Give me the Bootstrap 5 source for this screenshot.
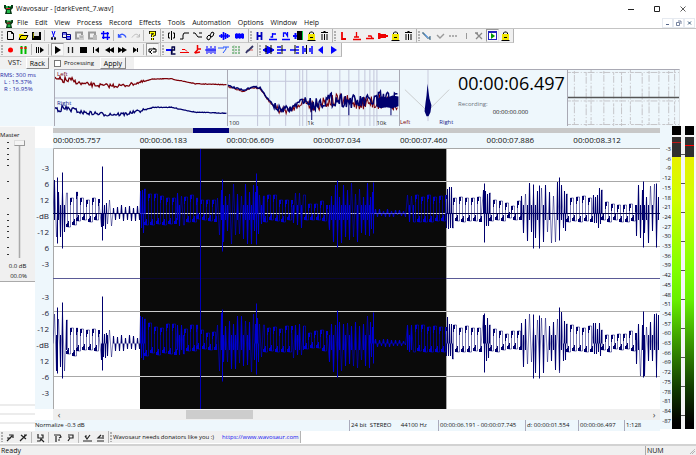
<!DOCTYPE html>
<html lang="en">
<head>
<meta charset="utf-8">
<meta name="viewport" content="width=device-width, initial-scale=1">
<title>Wavosaur</title>
<link href="https://cdn.jsdelivr.net/npm/bootstrap@5.3.0/dist/css/bootstrap.min.css" rel="stylesheet">
<style>
:root{--face:#f0f0f0;--panel:#eef7fc;--edge:#a9a9b4}
body{font-family:"Open Sans","Noto Sans",sans-serif;font-size:7px;line-height:10px;color:#111;background:#fff}
svg{display:block}
.app{min-height:100vh}
.titlebar{height:18px;padding:0 0 0 4px}
.titlebar .dino{width:9px;height:10px;margin-right:3px}
.caps button{border:0;background:none;width:26px;height:16px;padding:0}
.caps svg{width:8px;height:8px;margin:auto}
.menubar{height:11px;border-bottom:1px solid #c4c4c4;padding:0 1px 0 5px}
.menubar a{color:#111;text-decoration:none;line-height:10px}
.menus{gap:7px}
.menubar .dino{width:8px;height:9px;margin-right:4px}
.mdi button{border:1px solid #e6eaf0;background:#fff;width:11px;height:10px;padding:1px}
.mdi svg{width:7px;height:6px}
.toolrow{height:14px}
.toolset{background:var(--face);height:14px;border-right:1px solid #b4b4b4;border-bottom:1px solid #c8c8c8;padding-right:1px}
.grip{width:4px;height:10px;background:radial-gradient(circle at 2px 1px,#b0b0b0 1px,transparent 1px) 0 0/4px 3px}
.tool{width:13px;height:13px;padding:1px;border:0;background:none}
.tool.wide{width:15px;padding:1px 2px}
.tool svg{width:11px;height:11px}
.tool.on{background:#f8f8f8;border:1px solid #bbb;border-color:#999 #e4e4e4 #e4e4e4 #999;padding:0}
.rule{width:1px;height:11px;margin:0 2px 0 1px;background:#bcbcbc}
.vst{height:12px;width:134px;background:var(--face);padding-left:8px}
.push{font-size:7px;line-height:9px;height:12px;padding:0 3px;border:1px solid #fff;border-right-color:#888;border-bottom-color:#888;border-radius:0;background:var(--face)}
.vst input{width:7px;height:7px;margin:0 3px 0 0;-webkit-appearance:none;appearance:none;border:1px solid #777;background:#fff}
.vst input:checked{background:#446}
.vst label{font-size:6px;margin-left:5px}
.meters{height:57px}
.rms{width:54px;padding:3px 0 0;color:#2727a5;font-size:6px;line-height:7px;background:var(--panel)}
.scope{border:1px solid var(--edge);border-bottom:0;border-right:0;background:var(--panel);min-width:0}
.scope svg{width:100%;height:100%}
#scope{flex:172 1 0}
#spectrum{flex:170 1 0}
.clock{width:113px;background:var(--panel);border-top:1px solid var(--edge)}
.clock output{display:block;font-size:18px;line-height:26px;padding-left:4px;color:#000}
.tiny{font-size:6px;line-height:8px}
.side{width:35px}
.master{background:var(--face);height:156px;border-bottom:1px solid #aaa;border-top:1px solid #fafafa;font-size:6px;padding-top:3px}
.ticks{width:9px}
.fader{-webkit-appearance:none;appearance:none;writing-mode:vertical-lr;direction:rtl;width:12px;height:118px;margin:0;background:linear-gradient(#aaa,#aaa) center/1px 100% no-repeat,linear-gradient(#ddd,#ddd) center/3px 100% no-repeat}
.fader::-webkit-slider-thumb{-webkit-appearance:none;width:11px;height:6px;background:#f4f4f4;border:1px solid #999;border-top-color:#ddd;border-left-color:#ddd}
.slots div{height:9px;border-top:2px solid #ececec}
.center{min-width:0}
.overview{height:7px;padding:2px 0 0;margin-left:18px;background:var(--panel)}
.overview .track{height:5px;background:#c8c8c8}
.overview .pos{width:6%;margin-left:23%;height:5px;background:#00007a}
.timeline{height:15px;background:var(--panel);margin-left:18px;font-size:8px;line-height:13px}
.dbs{width:18px;background:var(--panel);font-size:8px;line-height:16px;color:#223;padding-right:4px;padding-top:3px}
.plot{min-height:261px;position:relative;min-width:0}
.plot svg{position:absolute;width:100%;height:100%}
.hbar{height:11px;margin-left:18px;background:#efefef}
.hbar button{border:0;background:none;width:12px;padding:0;line-height:9px;font-size:9px;color:#444}
.hbar .thumb{width:11%;margin-left:20%;height:9px;background:#cdcdcd}
.info{height:11px;background:var(--panel);font-size:6px;line-height:11px}
.cell{border-left:1px solid #aab;padding-left:1px;white-space:pre}
.cell.w1{width:89px}.cell.w2{width:87px}.cell.w3{width:53px}.cell.w4{width:46px}.cell.w5{width:36px}
.levels{width:36px;background:#f4f7f9;margin-bottom:2px}
.lnum{width:12px;font-size:6px;line-height:8px;color:#112;background:var(--panel);padding-top:19px;padding-right:1px;padding-bottom:4px}
.bar{width:9px;flex:none;border-top:9px solid #000;background:linear-gradient(#f4f4f4 0 2px,#303030 2px 22px,transparent 22px),linear-gradient(#e8f000 22px,#d0ff00 22%,#80ff00 46%,#68f000 56%,#3c9c00 70%,#123c00 86%,#000 98%);position:relative}
.bar i{position:absolute;left:0;right:0;top:7px;height:1px;background:#c01818}
.bar.r i{top:10px;background:#f00}
.notch{width:4px;background:repeating-linear-gradient(#f4f4f4 0 28px,#555 28px 29px)}
.donate{height:13px;font-size:6px;line-height:11px}
.donate a{color:#1414f0}
.donate .toolset{height:12px;border-bottom:0}
.statusbar{height:11px;background:var(--face);border-top:2px solid #d2d2d2;padding:0 1px;line-height:9px}
.num{width:50px;border-left:1px solid #aaa;padding-left:1px}
.resize{width:6px;height:6px}
</style>
<script src="https://cdn.jsdelivr.net/npm/bootstrap@5.3.0/dist/js/bootstrap.bundle.min.js"></script>
</head>
<body>
<svg width="0" height="0" class="position-absolute" aria-hidden="true">
  <symbol id="dino" viewBox="0 0 9 10"><path d="M0 1h2v1h5V1h2v3L7 6l1 4H1l1-4-2-2z" fill="#073b16"/><path d="M2 2h2v2H2zM5 2h2v1H5zM3 6h3v3H3z" fill="#21b84a"/><path d="M2 4h4v1H2z" fill="#d92a2a"/></symbol>
</svg>
<div class="app d-flex flex-column">
  <header>
    <div class="titlebar d-flex align-items-center">
      <svg class="dino"><use href="#dino"/></svg><span class="me-auto">Wavosaur - [darkEvent_7.wav]</span>
      <div class="caps d-flex">
        <button aria-label="Minimize"><svg viewBox="0 0 8 8"><path d="M1 4.500h6" stroke="#222"/></svg></button>
        <button aria-label="Maximize"><svg viewBox="0 0 8 8"><path d="M1.500 1.500h5v5h-5z" fill="none" stroke="#222"/></svg></button>
        <button aria-label="Close"><svg viewBox="0 0 8 8"><path d="M1.500 1.500l5 5m0-5l-5 5" stroke="#333" stroke-width=".8"/></svg></button>
      </div>
    </div>
    <nav class="menubar d-flex align-items-center">
      <svg class="dino"><use href="#dino"/></svg>
      <div class="menus d-flex me-auto"></div>
      <div class="mdi d-flex">
        <button aria-label="Minimize document"><svg viewBox="0 0 7 6"><path d="M2 4.500h3" stroke="#568"/></svg></button>
        <button aria-label="Restore document"><svg viewBox="0 0 7 6"><path d="M1.500 2.500h3v3h-3zM3 1h3v3" fill="none" stroke="#568" stroke-width=".8"/></svg></button>
        <button aria-label="Close document"><svg viewBox="0 0 7 6"><path d="M2 1.500l3 3m0-3l-3 3" stroke="#357"/></svg></button>
      </div>
    </nav>
    <div class="toolrow d-flex" id="tools1"></div>
    <div class="toolrow d-flex" id="tools2"></div>
    <div class="vst d-flex align-items-center">
      <span class="me-1">VST:</span><button class="push">Rack</button>
      <label class="d-flex align-items-center me-auto"><input type="checkbox">Processing</label>
      <button class="push me-2">Apply</button>
    </div>
  </header>

  <section class="meters d-flex pe-3">
    <div class="rms">RMS: 300 ms<div class="ps-1">L : 15.37%</div><div class="ps-1">R : 16.95%</div></div>
    <div class="scope" id="scope"></div>
    <div class="scope" id="spectrum"></div>
    <div class="scope" id="vector"></div>
    <div class="clock"><output>00:00:06.497</output><div class="tiny ps-1 pt-1 text-secondary">Recording:</div><div class="tiny text-center">00:00:00.000</div></div>
    <div class="scope border-end" id="sono"></div>
  </section>

  <main class="d-flex flex-grow-1">
    <aside class="side d-flex flex-column">
      <div class="master">
        <label for="vol" class="d-block">Master</label>
        <div class="d-flex"><svg class="ticks" viewBox="0 0 9 118" height="118"></svg><div class="ps-1"><input class="fader" id="vol" type="range" value="100"></div></div>
        <div class="text-center">0.0 dB</div><div class="text-end pe-2">00.0%</div>
      </div>
      <div class="slots mt-auto"><div></div><div></div><div></div></div>
    </aside>
    <div class="center flex-grow-1 d-flex flex-column">
      <div class="overview"><div class="track"><div class="pos"></div></div></div>
      <div class="timeline d-flex"></div>
      <div class="d-flex flex-grow-1">
        <div class="dbs d-flex flex-column"></div>
        <div class="plot flex-grow-1" id="plot"></div>
      </div>
      <div class="hbar d-flex align-items-center"><button aria-label="Scroll left">‹</button><div class="thumb"></div><button class="ms-auto" aria-label="Scroll right">›</button></div>
      <div class="info d-flex"><span class="flex-grow-1">Normalize -0.3 dB</span><span class="cell w1">24 bit  STEREO      44100 Hz</span><span class="cell w2">00:00:06.191 - 00:00:07.745</span><span class="cell w3">d: 00:00:01.554</span><span class="cell w4">00:00:06.497</span><span class="cell w5">1:128</span></div>
    </div>
    <aside class="levels d-flex">
      <div class="lnum d-flex flex-column justify-content-between text-end"></div>
      <div class="bar"><i></i></div><div class="notch"></div><div class="bar r"><i></i></div>
    </aside>
  </main>

  <footer>
    <div class="donate d-flex"><div class="d-flex" id="tools3"></div>
      <div class="toolset d-flex align-items-center"><span class="grip"></span><span class="me-2">Wavosaur needs donators like you :)</span><a href="https://www.wavosaur.com" class="text-decoration-none">https://www.wavosaur.com</a></div></div>
    <div class="statusbar d-flex align-items-end"><span class="me-auto">Ready</span><span class="num d-flex align-items-center justify-content-between">NUM<svg class="resize" viewBox="0 0 6 6"><path d="M1 6l5-5M3 6l3-3" stroke="#999" stroke-dasharray="1 .6"/></svg></span></div>
  </footer>
</div>
<script>
const $ = s => document.querySelector(s);
const K = '#000', B = '#00f', R = '#f00', G = '#999';
const line = (d, c = K, w = 1) => `<path d="${d}" fill="none" stroke="${c}" stroke-width="${w}"/>`;
const fill = (d, c = K) => `<path d="${d}" fill="${c}"/>`;
const wave = (c, w = 1) => line('M0 6h11M2.500 4v4M4.500 2v8M6.500 3v6M8.500 4v4', c, w);
const lock = () => fill('M2 4h7v6H2z', '#f0e600') + line('M3.500 4V3l1-1h2l1 1v1M4 7.500h3M1.500 10.500h8', K);
const bin = line('M2 2.500h7M4.500 1.500h2M3 4v6M5.500 4v6M8 4v6');
const icons = {
  New: line('M2.500 1.500h4l2 2v6h-6zM6.500 1.500v2h2'),
  Open: fill('M1 4h4l1 1h3v4H1z', '#f4e800') + line('M1 9.500l2-4h7l-2 4zM6 2.500h3') ,
  Save: fill('M1 2h9v8H1z') + fill('M3 2h5v4H3z', '#ddd') + fill('M2 3h1v5H2z', '#880'),
  Cut: line('M4 1l2 6M7 1L5 7', B) + line('M3.500 7.500h1v2h-1zM6.500 7.500h1v2h-1z', '#113'),
  Copy: line('M1.500 2.500h4v5h-4zM5.500 4.500h4v5h-4z', '#007') + line('M2 4h3M6 6.500h3M6 8h3', B),
  Paste: line('M2 2.500h6v6H2z', G, 2) + fill('M5 5h5v5H5z', '#ccc') + line('M6 7h3', G),
  'Paste special': line('M2 2.500h6v6H2z', G, 2) + fill('M6 5h4v5H6z', '#bbb'),
  Crop: line('M3.500 1v8M1 3.500h8M7.500 2v8M2 7.500h8', B, 1.400),
  Undo: line('M1.500 4v3h3M2 6.500c2-4 6-2 7 1', '#35f', 1.300),
  Redo: line('M9.500 4v3h-3M9 6.500c-2-4-5-2-7 1', '#bbb'),
  Help: line('M3.500 4V2.500h4v2l-2 1V7M5.500 8v2', '#000', 3) + line('M3.500 4V2.500h4v2l-2 1V7M5.500 8v2', '#ff0', 1.300),
  Snap: line('M5.500 1v9M4 3H2.500v5H4M7 3h1.500v5H7'),
  Fade: line('M1 9h3V5l1-2h5'), Smooth: line('M1 3h2l3 4h4M7 3h3'),
  Link: line('M2 7l2-2 2 2-2 3-2-1zM5 5l2-3 2 1-1 3-2 1z'),
  Wave: wave(B, 1.600), 'Wave fit': fill('M1 4l2-1 1 1 1-1 2 1 1-1 2 1v4L9 9 7 8 6 9 4 8 3 9 1 8z', B),
  Marker: line('M3.500 2v8M7.500 2v8M4 6h3', '#00b', 1.800),
  'Next marker': line('M2 9.500h8M5.500 3v4h-2M5 4h4', B, 1.300), 'Marker pair': line('M2 9.500h8M3.500 7V3h2l2 3V2', B, 1.300),
  'Wave select': fill('M4 1h5v9H4z') + line('M0 6h4M2.500 3v6', B, 2) + line('M9.500 1v9', '#0c4'),
  'Lock markers': lock(), 'Delete markers': bin,
  Loop: line('M4 2v7h4', '#e00', 1.800), 'Loop start': line('M2 9.500h8M5.500 2v5M3 7h5', '#e00', 1.300), 'Loop end': line('M2 8.500h8M4 6h3l1 2', '#e00', 1.400),
  'Loop wave': fill('M1 3h2l1 1h5v1h2v2H9v1H4L3 9H1z', '#e00'), 'Lock loop': lock(), 'Delete loop': bin,
  Curve: line('M1 2v2h2v2h2v2h3M8 6v4', '#257') + line('M3 4l3 4', '#6af'), Check: line('M2 5l3 3 4-4', G, 1.400), Dots: line('M1 6h9', G, 1.300).replace('/>', ' stroke-dasharray="2 1"/>'),
  Down: line('M5.500 3v6', G), Clear: line('M2 3l6 6M8 3l-6 6M1 3h3', '#888', 1.300),
  Run: fill('M1 1h9v9H1z', '#22b') + fill('M2 3h7v6H2z', '#fff') + fill('M4 3l4 3-4 3z', '#090'), Guard: lock(),
  Record: '<circle cx="5.500" cy="6" r="2.500" fill="red"/>', Monitor: line('M3.500 2v8M7.500 2v8', '#0b0', 2) + line('M3.500 3v2M7.500 3v2', R, 2),
  'Play from start': line('M1.500 3v6M3.500 3v6') + fill('M5 3l4 3-4 3z'), Play: fill('M3 2l6 4-6 4z'), Pause: line('M3.500 3v6M7.500 3v6', '#222', 1.300),
  Stop: fill('M2 3h7v6H2z'), First: line('M2.500 3v6') + fill('M8 3v6L4 6z'), Rewind: fill('M6 3v6L1 6zM10 3v6L5 6z'), Forward: fill('M1 3l5 3-5 3zM5 3l5 3-5 3z'), End: fill('M3 3l4 3-4 3zM7 4h1v4H7z'),
  Repeat: line('M4 8H2V5h7v3H6M5 6l-2 2 2 2M6 4l2 1'),
  Env: line('M0 6h5', B, 2) + line('M5.500 3h3v3h-3v4h4M6 3v6', '#004', 1.300), Flat: line('M1 8.500h9M3 5.500h3l2 2', '#e00'), Peak: line('M5.500 1v5l-3 3M6 5h3M3 9l5-1', '#e00', 1.500),
  Spread: line('M2 2v8M4 4v5M6 2v8M8 4v5M10 2v8M0 6h11', B), Text: line('M0 4h6M5 3h6M8 3v2l-3 4', '#25f'), Matrix: line('M1 3h9M1 6h9M1 9h9', '#394').replace('/>', ' stroke-dasharray="2 1"/>') + line('M3 1v9M8 2v8', '#8a8', .6), Pen: line('M2 9l2-3M4 7l5-5', '#336', 1.800) + line('M6 6h3', '#c55'),
  'Zoom in': wave(B, 2) + line('M3 1v9M8 1v9'), 'Zoom left': line('M1 3h4M1 6h9M1 9h4', B, 1.500) + line('M6 1v9', K), 'Zoom right': line('M7 3h3M1 6h9M7 9h3', B, 1.500) + line('M6 1v9', K), 'Zoom out': line('M1 2v8M3 4v4M8 4v4M10 2v8', B, 1.500) + line('M4.500 1v9'),
  Left: fill('M8 2v8L3 6z', B), Right: fill('M3 2v8l6-4z', B),
  A1: line('M2 9l5-5M4 3h4v3M2 6h4', '#222', 1.200), A2: line('M2 9l6-6M3 3l5 4M6 3h3', '#222', 1.200), A3: line('M3 2v4h5V3H6M2 9h3l1-2 3 3', '#222', 1.200),
  A4: line('M2 3h6l1 2-2 1M4 4v6M6 8h2', '#222', 1.200), A5: line('M3 3h5v3H5L3 9M3 5h2', '#222', 1.200), A6: line('M1 9h9M3 4l2 3 3-4M3 4h2', '#222', 1.200), A7: line('M2 9h7M6 3L3 6h4M8 3v4', '#222', 1.200)
};
// A group is a list of tool names; "|" puts a divider and a leading "*" marks a pressed tool.
const rows = {
  tools1: ['New,Open,Save,|,Cut,Copy,Paste,Paste special,Crop,|,Undo,Redo,|,Help', 'Snap,Fade,Smooth,Link,Wave,Wave fit', 'Marker,Next marker,Marker pair,Wave select,Lock markers,Delete markers', 'Loop,Loop start,Loop end,Loop wave,Lock loop,Delete loop', 'Curve,Check,Dots,Down,Clear,*Run,Guard'],
  tools2: ['Record,Monitor,|,Play from start,|,*Play,Pause,Stop,First,Rewind,Forward,End,|,*Repeat', 'Env,Flat,Peak,Spread,Text,Matrix,Pen', 'Zoom in,Zoom left,Zoom right,Zoom out,Left,Right'],
  tools3: ['A1,A2,|,A3,|,A4,A5,|,A6,A7']
};
for (const id in rows) $('#' + id).innerHTML = rows[id].map(g => '<div class="toolset d-flex align-items-center" role="toolbar"><span class="grip"></span>' + g.split(',').map(n => {
  if (n === '|') return '<span class="rule"></span>';
  const on = n[0] === '*', k = n.replace('*', '');
  return `<button class="tool${on ? ' on' : ''}${k.startsWith('Wave') && k !== 'Wave select' ? ' wide' : ''}" aria-label="${k}"><svg viewBox="0 0 11 11">${icons[k]}</svg></button>`;
}).join('') + '</div>').join('');

$('.menus').innerHTML = 'File Edit View Process Record Effects Tools Automation Options Window Help'.split(' ').map(t => `<a href="#">${t}</a>`).join('');
$('.timeline').innerHTML = ['05.757', '06.183', '06.609', '07.034', '07.460', '07.886', '08.312'].map(t => `<span class="col">00:00:${t}</span>`).join('');
$('.dbs').innerHTML = ['-3,6,12,-dB,-12,6,-3', '-3,-6,-12,-dB,12,-6,-3'].map(g => `<div class="flex-fill d-flex flex-column justify-content-center text-end">${g.split(',').map(t => `<div>${t}</div>`).join('')}</div>`).join('');
$('.lnum').innerHTML = Array.from({length: 29}, (_, i) => `<div>-${3 * i + 3}</div>`).join('');
$('.ticks').innerHTML = line([2, 8, 14, 19, 25, 41, 58, 74, 80, 86, 91, 97, 107, 114].map(y => `M7 ${y}.5h3`).join(''), '#333');

let seed = 7;
const rnd = () => (seed = (seed * 16807) % 2147483647) / 2147483647;
// [from, to, peak above zero, peak below zero, distance between turning points, jitter]
const parts = [[1, 14, 34, 28, 2, .5], [14, 24, 22, 16, 3, .4], [24, 48, 18, 9, 3, .3], [48, 54, 12, 17, 1, .3], [54, 60, 14, 14, 2, .3], [60, 87, 9, 8, 2, .4],
  [87, 92, 28, 20, 1, .3], [92, 124, 22, 13, 3, .35], [124, 131, 28, 16, 2, .4], [131, 144, 20, 10, 3, .3], [144, 164, 14, 9, 3, .4], [164, 201, 31, 31, 2, .5], [201, 206, 30, 22, 1, .4], [206, 211, 22, 14, 2, .3], [211, 240, 19, 9, 3, .3], [240, 252, 26, 18, 2, .5], [252, 276, 14, 8, 3, .4], [276, 317, 31, 32, 2, .5], [317, 320, 22, 16, 1, .3], [320, 354, 5, 4, 2, .6], [354, 362, 19, 9, 2, .1], [362, 393, 19, 9, 3, .2],
  [393, 400, 27, 16, 1, .3], [400, 430, 19, 9, 3, .2], [430, 437, 30, 18, 1, .5], [437, 452, 18, 9, 3, .3], [452, 468, 13, 8, 3, .4], [468, 510, 32, 31, 2, .5], [510, 514, 24, 18, 1, .3], [514, 540, 19, 9, 3, .2], [540, 549, 26, 15, 1, .5], [549, 583, 13, 9, 3, .4], [583, 607, 30, 33, 2, .5]];
const spikes = [[4, 36, 30], [9, 41, 35], [49, 47, 27], [169, 34, 38], [203, 40, 31], [284, 33, 34], [320, 31, 20], [431, 30, 29], [480, 29, 35], [486, 28, 35], [506, 36, 27], [590, 32, 34], [603, 30, 34]];
// The thin path joins the turning points; the bold one thickens the crests and troughs.
function channel(mid) {
  let thin = `M0 ${mid}`, bold = '', up = true;
  for (const [a, b, t, u, s, j] of parts) for (let x = a; x < b; x += s) {
    const y = Math.round(mid + (up ? -t : u) * (1 - j * rnd()));
    thin += s === 3 ? `H${x}.5V${y}` : `L${x}.5 ${y}`;
    if (s === 3) bold += up ? `M${x}.5 ${y}v7M${x + 1}.5 ${y}v4` : `M${x}.5 ${y}v-4M${x + 1}.5 ${y}v-6M${x - 1}.5 ${y}v-3`;
    if (s === 2 && t > 12 && rnd() > .4) bold += `M${x}.5 ${y}V${Math.round(mid + (up ? 6 : -9))}`;
    if (s === 1 || (s === 2 && t < 12)) bold += `M${x}.5 ${y}V${mid}`;
    up = !up;
  }
  bold += spikes.map(([x, t, u]) => `M${x}.5 ${mid - t}V${mid + u}`).join('');
  return {thin, bold};
}
const ch = [channel(65.5), channel(195.5)];
const draw = (c, o) => ch.map(p => `<path d="${p.thin}" fill="none" stroke="${c}" stroke-opacity="${o}"/>` + line(p.bold, c)).join('');
$('#plot').innerHTML = `<svg viewBox="0 0 607 261" preserveAspectRatio="none">
<clipPath id="sel"><path d="M87 0h306v261H87z"/></clipPath><clipPath id="rest"><path d="M0 0h87v261H0zM393 0h214v261H393z"/></clipPath>
<path d="M0 0h607v261H0z" fill="#fff"/><path d="M87 0h306v261H87z" fill="#0a0a0a"/>
<path d="M.5 261V.5H607M0 33.500h607M0 98.500h607M0 163.500h607M0 228.500h607M393.500 0v261" stroke="#a8a8a8" fill="none"/>
<path d="M87 33.500h306M87 65.500h306M87 98.500h306M87 163.500h306M87 228.500h306" stroke="#ccc" fill="none"/>
<path d="M0 130.500h607" stroke="#5a5a96"/><path d="M87 130.500h306" stroke="#0a0730"/>
<path d="M0 65.500h87M393 65.500h214" stroke="#00003c"/>
<g clip-path="url(#rest)">${draw('#00006e', .5)}</g><g clip-path="url(#sel)">${draw('#0000d2', .65)}</g>
<path d="M147.500 1v260" stroke="#0000b8"/></svg>`;

function trace(pts, noise, mid = 0) {
  let d = '';
  for (let i = 0; i < pts.length - 1; i++) {
    const [x, y] = pts[i], [u, v] = pts[i + 1];
    for (let s = x; s < u; s++) d += `${d ? 'L' : 'M'}${s} ${(y + mid + (v - y) * (s - x) / (u - x) + (rnd() - .5) * noise(s)).toFixed(1)}`;
  }
  return d;
}
const slow = [[0, 10], [18, 11], [26, 14], [48, 16], [68, 16], [88, 12], [98, 9], [116, 9], [140, 14], [172, 15]];
const fade = x => x < 18 ? 7 : x < 75 ? 4 : x < 90 ? 3 : .6;
const text = (x, y, s, c) => `<text x="${x}" y="${y}" font-size="6" fill="${c}">${s}</text>`;
$('#scope').innerHTML = `<svg viewBox="0 0 172 57" preserveAspectRatio="none">${line('M0 28.500h172', '#b8bcd0')}${line(trace(slow, fade), '#7c0008', 1.300)}${line(trace(slow, fade, 29), '#00006e', 1.300)}${text(2, 6, 'Left', '#7c0008')}${text(2, 36, 'Right', '#22228a')}</svg>`;
const spec = [[0, 16], [16, 21], [24, 17], [32, 18], [40, 30], [50, 40], [62, 40], [70, 34], [76, 30], [84, 36], [96, 31], [110, 30], [130, 33], [150, 31], [170, 30]];
const hiss = x => x < 45 ? 1.5 : x < 80 ? 7 : x < 145 ? 14 : 20;
$('#spectrum').innerHTML = `<svg viewBox="0 0 170 57" preserveAspectRatio="none">${line('M0 11.500h170M0 46.500h170M29.500 0v57M41.500 0v57M57.500 0v57M71.500 0v57M74.500 0v57M78.500 0v57M99.500 0v57M111.500 0v57M120.500 0v57M130.500 0v57M136.500 0v57M141.500 0v57M145.500 0v57M148.500 0v57', '#c3c6da')}${line(trace(spec, hiss, 1), '#7c0008')}${line(trace(spec, hiss), '#00006e', 1.500)}${fill('M148 30l5-3 6 1 5-2 6 1v10l-6 2-6-1-6 1-4-2z', '#00006e')}${line('M83.500 33v18M120.500 32v14M162.500 34v12', '#00006e')}${text(1, 56, '100', '#222')}${text(79, 56, '1k', '#222')}${text(148, 56, '10k', '#222')}</svg>`;
$('#vector').innerHTML = `<svg width="55" height="57" viewBox="0 0 55 57">${line('M28.500 0v52', '#c9cbdd')}${line('M5 20l23 22 22-22', '#bbb', .7)}${fill('M28 14l1 8 1 7 2 7-1 7-2 4h-2l-2-5 1-9 1-7z', '#00006e')}${text(0, 55, 'Left', '#7c0008')}${text(40, 55, 'Right', '#22228a')}</svg>`;
let dust = '';
for (const x of [6, 18, 23, 36, 46, 54, 63, 75, 82, 92, 102, 108]) dust += `M${x}.5 ${Math.floor(rnd() * 4)}v55`;
$('#sono').innerHTML = `<svg width="113" height="57" viewBox="0 0 113 57">${line(dust + 'M0 2.500h113M0 31.500h113M0 55.500h113', '#c4c4c8').replace('/>', ' stroke-dasharray="3 1 7 2 1 2"/>')}${line('M0 28h113', '#555', 1.300)}</svg>`;
</script>
</body>
</html>
